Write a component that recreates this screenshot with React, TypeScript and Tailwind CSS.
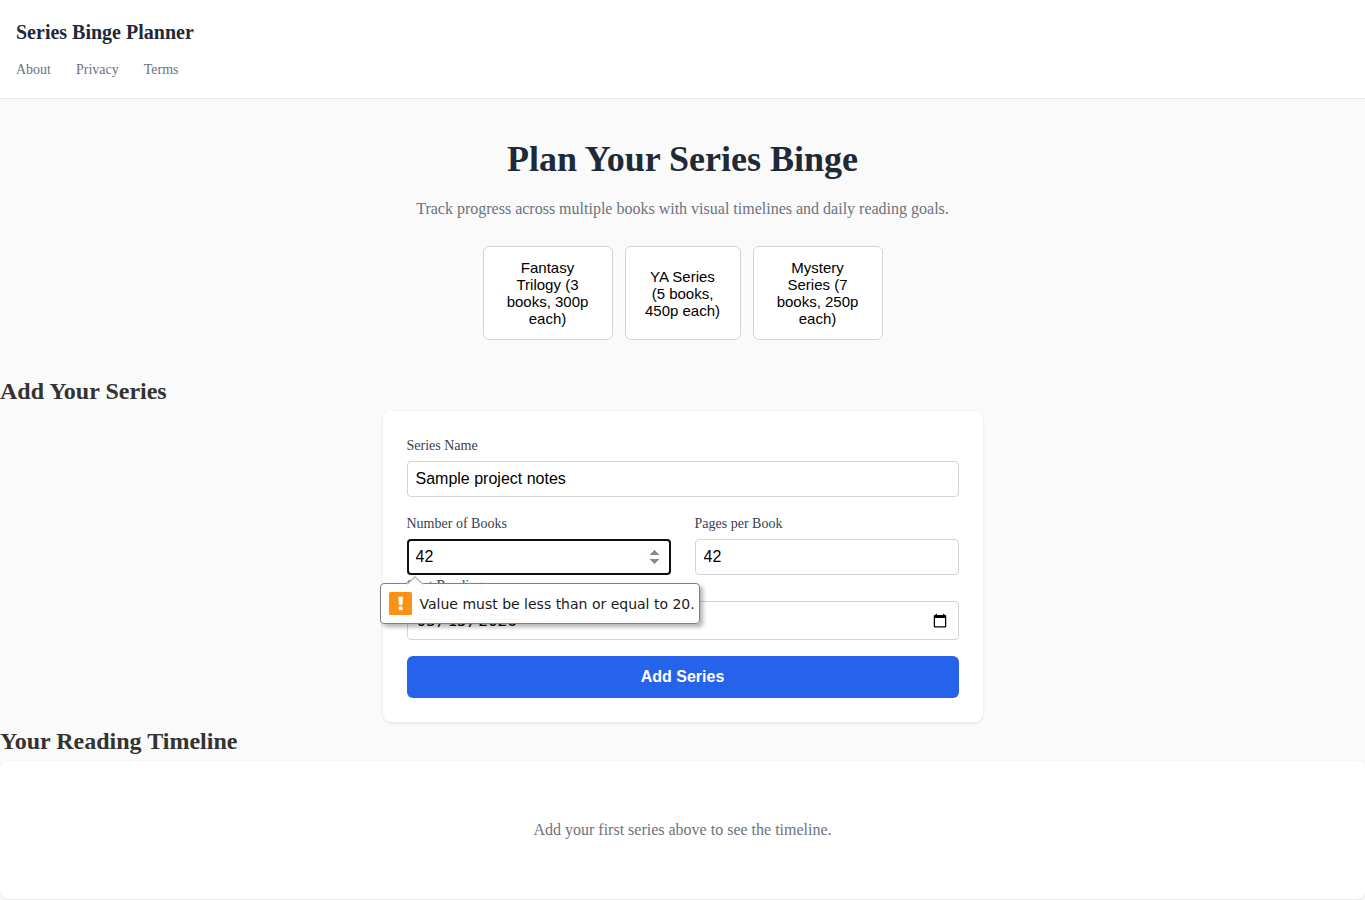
import { useId, useState } from "react";
import type { ComponentProps } from "react";

const presets = [
  { label: "Fantasy Trilogy (3 books, 300p each)", width: "w-[130px]" },
  { label: "YA Series (5 books, 450p each)", width: "w-[116px]" },
  { label: "Mystery Series (7 books, 250p each)", width: "w-[130px]" },
];

const inputBase =
  "block w-full rounded border border-[#d1d5db] bg-white p-2 text-base text-black";

function Label(props: ComponentProps<"label">) {
  return <label {...props} className="mb-1 block text-sm leading-[22px] text-[#374151]" />;
}

function ValidationBubble({ id, message }: { id: string; message: string }) {
  return (
    <div
      id={id}
      role="alert"
      className="absolute -left-[27px] top-full z-10 mt-2 flex h-[41px] w-[320px] items-center gap-2 rounded border border-[#808080] bg-white/97 pl-2 shadow-[3px_3px_4px_rgba(0,0,0,0.3)]"
    >
      <svg className="absolute -top-2 left-[26px]" width="16" height="9" viewBox="0 0 16 9" aria-hidden="true">
        <path d="M0 9 L0 7.5 L8 0.7 L16 7.5 L16 9" fill="#fff" />
        <path d="M0.5 8 L8 0.7 L15.5 8" fill="none" stroke="#808080" strokeWidth="1" />
      </svg>
      <svg width="23" height="23" viewBox="0 0 23 23" aria-hidden="true">
        <rect width="23" height="23" rx="1.5" fill="#fb9214" />
        <path d="M9.3 4.8h4.6l-.5 8.2h-3.6z" fill="#fff" />
        <rect x="9.5" y="14.3" width="4.2" height="3.8" rx="1.6" fill="#fff" />
      </svg>
      <span className="whitespace-nowrap font-['DejaVu_Sans',sans-serif] text-sm text-[#1a1a1a]">{message}</span>
    </div>
  );
}

export default function App() {
  const id = useId();
  const [name, setName] = useState("Sample project notes");
  const [books, setBooks] = useState("42");
  const [pages, setPages] = useState("42");
  const [start, setStart] = useState("2026-05-15");

  return (
    <div className="min-h-screen bg-[#fafafa] font-['Liberation_Serif','Times_New_Roman',serif] text-base leading-[26px] text-[#333]">
      <header className="border-b border-[#e5e7eb] bg-white p-4">
        <h1 className="text-xl leading-8 font-bold text-[#1f2937]">Series Binge Planner</h1>
        <nav className="mt-2.5 flex gap-[25px] text-sm leading-6 text-[#6b7280]">
          <a href="#about">About</a>
          <a href="#privacy">Privacy</a>
          <a href="#terms">Terms</a>
        </nav>
      </header>

      <main>
        <section className="flex flex-col items-center px-4 py-8 text-center">
          <h2 className="text-4xl leading-[57px] font-bold text-[#1f2937]">Plan Your Series Binge</h2>
          <p className="mt-2 text-[#6b7280]">
            Track progress across multiple books with visual timelines and daily reading goals.
          </p>
          <div className="mt-6 flex gap-3">
            {presets.map((preset) => (
              <button
                key={preset.label}
                type="button"
                className={`${preset.width} rounded-md border border-[#d1d5db] bg-white px-[18px] py-3 font-['Liberation_Sans',Arial,sans-serif] text-[15px] leading-[17px] text-black`}
              >
                {preset.label}
              </button>
            ))}
          </div>
        </section>

        <section>
          <h2 className="text-2xl leading-[39px] font-bold">Add Your Series</h2>
          <form
            noValidate
            onSubmit={(event) => event.preventDefault()}
            className="mx-auto max-w-[600px] rounded-lg bg-white p-6 shadow-[0_1px_3px_rgba(0,0,0,0.1)]"
          >
            <div className="mb-4">
              <Label htmlFor={`${id}-name`}>Series Name</Label>
              <input
                id={`${id}-name`}
                type="text"
                value={name}
                onChange={(event) => setName(event.target.value)}
                className={`${inputBase} font-['Liberation_Sans',Arial,sans-serif] leading-[18px]`}
              />
            </div>
            <div className="grid grid-cols-2 gap-6">
              <div>
                <Label htmlFor={`${id}-books`}>Number of Books</Label>
                <div className="relative">
                  <input
                    id={`${id}-books`}
                    type="number"
                    min={1}
                    max={20}
                    value={books}
                    aria-describedby={`${id}-books-error`}
                    onChange={(event) => setBooks(event.target.value)}
                    className={`${inputBase} font-['Liberation_Sans',Arial,sans-serif] leading-[18px] outline-2 -outline-offset-2 outline-[#101010] [&::-webkit-inner-spin-button]:opacity-100`}
                  />
                  <ValidationBubble id={`${id}-books-error`} message="Value must be less than or equal to 20." />
                </div>
              </div>
              <div>
                <Label htmlFor={`${id}-pages`}>Pages per Book</Label>
                <input
                  id={`${id}-pages`}
                  type="number"
                  value={pages}
                  onChange={(event) => setPages(event.target.value)}
                  className={`${inputBase} font-['Liberation_Sans',Arial,sans-serif] leading-[18px]`}
                />
              </div>
            </div>
            <div className="mb-4">
              <Label htmlFor={`${id}-start`}>Start Reading</Label>
              <input
                id={`${id}-start`}
                type="date"
                value={start}
                onChange={(event) => setStart(event.target.value)}
                className={`${inputBase} font-['DejaVu_Sans_Mono',monospace] leading-[21px]`}
              />
            </div>
            <button
              type="submit"
              className="block w-full rounded-md bg-[#2563eb] p-3 font-['Liberation_Sans',Arial,sans-serif] text-base leading-[18px] font-bold text-white"
            >
              Add Series
            </button>
          </form>
        </section>

        <section>
          <h2 className="text-2xl leading-[39px] font-bold">Your Reading Timeline</h2>
          <div className="rounded-lg bg-white px-6 py-14 text-center text-[#6b7280] shadow-[0_1px_3px_rgba(0,0,0,0.1)]">
            <p>Add your first series above to see the timeline.</p>
          </div>
        </section>
      </main>
    </div>
  );
}
